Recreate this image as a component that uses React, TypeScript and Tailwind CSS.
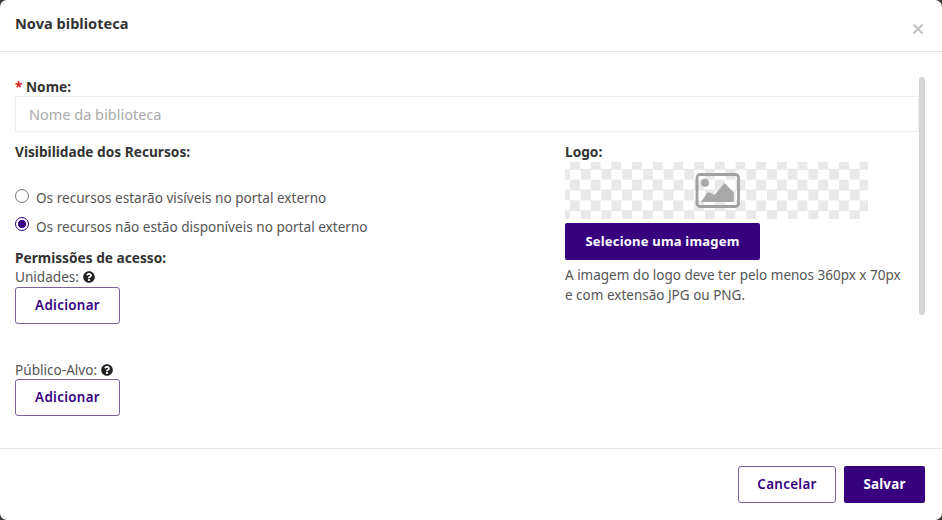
import React from "react";

const HelpIcon = () => (
  <svg viewBox="0 0 512 512" className="w-3 h-3 ml-1 inline-block" fill="#222">
    <path d="M504 256c0 137-111 248-248 248S8 393 8 256 119 8 256 8s248 111 248 248zM262.700 90c-54.500 0-89.300 23-116.500 63.800-3.500 5.300-2.400 12.400 2.700 16.300l34.700 26.300c5.200 3.900 12.600 3 16.700-2.100 17.900-22.700 30.100-35.800 57.300-35.800 20.400 0 45.700 13.100 45.700 33 0 15-12.400 22.700-32.600 34-23.600 13.200-54.800 29.700-54.800 70.900V300c0 6.600 5.400 12 12 12h56c6.600 0 12-5.400 12-12v-1.300c0-28.600 83.500-29.800 83.500-107.200 0-58.300-60.500-102.500-116.700-102.500zM256 339c-25.500 0-46.200 20.700-46.200 46.200 0 25.500 20.700 46.200 46.200 46.200s46.200-20.700 46.200-46.200c0-25.500-20.700-46.200-46.200-46.200z" />
  </svg>
);

const OutlineButton = ({ label, className }: { label: string; className: string }) => (
  <button className={`h-[37px] rounded-[3px] border border-[#7b6399] bg-white text-[13.4px] font-semibold tracking-[0.3px] text-[#37007f] ${className}`}>
    {label}
  </button>
);

export default function App() {
  return (
    <div className="h-[520px] w-[942px] bg-[#3a3a3a] font-['Noto_Sans',sans-serif]">
      <div className="relative flex h-full flex-col overflow-hidden rounded-[7px] bg-white text-[#555]">
        <header className="flex h-[52px] shrink-0 border-b border-[#e8e8e8] pl-[15px] pt-[12px]">
          <h1 className="text-[14.6px] leading-[22px] font-bold text-[#333]">Nova biblioteca</h1>
        </header>
        <button className="absolute right-[18px] top-[23px] text-[#c4c4c4]">
          <svg viewBox="0 0 12 12" className="h-[12px] w-[12px]" stroke="currentColor" strokeWidth="2.2" fill="none">
            <path d="M1.500 1.500l9 9M10.500 1.500l-9 9" />
          </svg>
        </button>

        <div className="relative h-[396px] shrink-0 pl-[15px] pr-[23px] pt-[25px]">
          <label className="block text-[13.7px] leading-[19px] font-bold text-[#333]">
            <span className="text-[#d9252b]">*</span> Nome:
          </label>
          <input
            placeholder="Nome da biblioteca"
            className="block h-[36px] w-full border border-[#eeeeee] px-[13px] text-[14.5px] placeholder:text-[#aaaaaa] outline-none"
          />

          <div className="mt-[10px] flex">
            <div className="w-[550px] shrink-0">
              <div className="text-[13.7px] leading-[20px] font-bold text-[#333]">Visibilidade dos Recursos:</div>
              <div className="mt-[25px] flex h-[23px] items-center text-[13.6px]">
                <span className="mb-[6px] mr-[7px] h-[14px] w-[14px] rounded-full border border-[#777] bg-white" />
                Os recursos estarão visíveis no portal externo
              </div>
              <div className="mt-[6px] flex h-[23px] items-center text-[13.6px]">
                <span className="mb-[8px] mr-[7px] flex h-[14px] w-[14px] items-center justify-center rounded-full border border-[#37007f] bg-white">
                  <span className="h-[8px] w-[8px] rounded-full bg-[#37007f]" />
                </span>
                Os recursos não estão disponíveis no portal externo
              </div>
              <div className="mt-[9px] text-[13.7px] leading-[20px] font-bold text-[#333]">Permissões de acesso:</div>
              <div className="mb-[1px] flex h-[18px] items-center text-[13.6px]">
                Unidades: <HelpIcon />
              </div>
              <OutlineButton label="Adicionar" className="block w-[105px]" />
              <div className="mt-[37px] flex h-[18px] items-center text-[13.6px]">
                Público-Alvo: <HelpIcon />
              </div>
              <OutlineButton label="Adicionar" className="block w-[105px]" />
            </div>

            <div className="flex-1">
              <div className="text-[13.7px] leading-[20px] font-bold text-[#333]">Logo:</div>
              <div className="flex h-[57px] w-[303px] items-center justify-center bg-[repeating-conic-gradient(#ffffff_0_25%,#e9e9e9_0_50%)] bg-[length:20.7px_20.7px] bg-[position:5px_-3px] pl-[3px]">
                <svg viewBox="0 0 46 38" className="h-[38px] w-[46px]">
                  <rect x="2" y="2.500" width="41.500" height="32" rx="3" fill="none" stroke="#a0a0a0" strokeWidth="2.800" />
                  <circle cx="10" cy="10.700" r="4" fill="#a8a8a8" />
                  <path d="M6 30l7-10 6.500 3 10-12 9.300 9.700V30z" fill="#a8a8a8" />
                </svg>
              </div>
              <button className="mt-[4px] h-[37px] w-[195px] rounded-[2px] bg-[#37007f] text-[13px] font-bold tracking-[0.2px] text-white">
                Selecione uma imagem
              </button>
              <p className="mt-[5px] w-[345px] text-[13.5px] leading-[20px]">
                A imagem do logo deve ter pelo menos 360px x 70px e com extensão JPG ou PNG.
              </p>
            </div>
          </div>

          <div className="absolute right-[17px] top-[25px] h-[238px] w-[6px] rounded-[3px] bg-[#d6d6d6]" />
        </div>

        <footer className="flex flex-1 justify-end gap-[8px] border-t border-[#e8e8e8] pr-[17px] pt-[17px]">
          <OutlineButton label="Cancelar" className="w-[98px]" />
          <button className="h-[37px] w-[81px] rounded-[2px] bg-[#37007f] text-[13.4px] font-bold tracking-[0.2px] text-white">
            Salvar
          </button>
        </footer>
      </div>
    </div>
  );
}
